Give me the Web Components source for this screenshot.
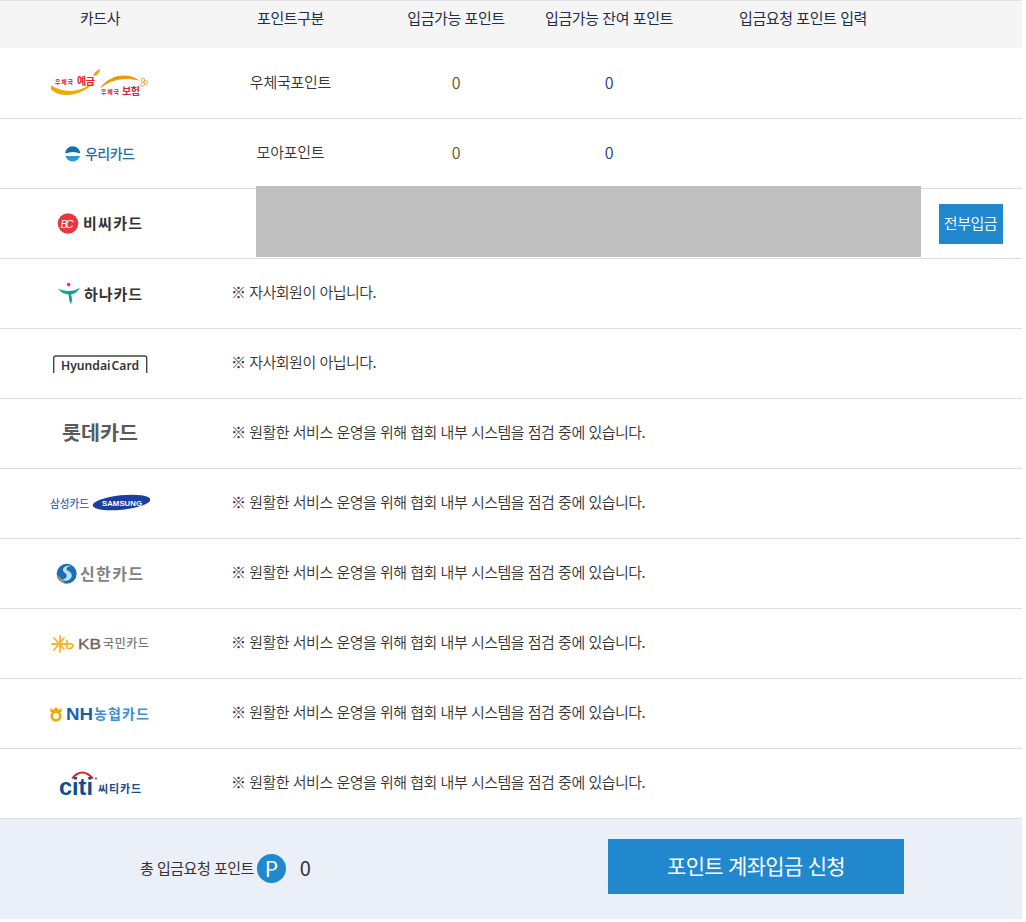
<!DOCTYPE html>
<html lang="ko">
<head>
<meta charset="utf-8">
<title>포인트 계좌입금</title>
<style>
    html, body {
        margin: 0;
        background: #fff;
        font-family: "Noto Sans CJK KR", "Noto Sans", sans-serif;
        color: #333;
    }
</style>
</head>
<body>
<points-table>
    <table-head>
        <span>카드사</span>
        <span>포인트구분</span>
        <span>입금가능 포인트</span>
        <span>입금가능 잔여 포인트</span>
        <span>입금요청 포인트 입력</span>
    </table-head>

    <card-row>
        <card-logo slot="logo" name="epost"></card-logo>
        <span slot="kind">우체국포인트</span>
        <span slot="avail">0</span>
        <span slot="rest">0</span>
    </card-row>
    <card-row>
        <card-logo slot="logo" name="woori"></card-logo>
        <span slot="kind">모아포인트</span>
        <span slot="avail">0</span>
        <span slot="rest">0</span>
    </card-row>
    <card-row>
        <card-logo slot="logo" name="bc"></card-logo>
        <redact-block slot="cover"></redact-block>
        <action-button slot="action">전부입금</action-button>
    </card-row>
    <card-row>
        <card-logo slot="logo" name="hana"></card-logo>
        <span slot="message">※ 자사회원이 아닙니다.</span>
    </card-row>
    <card-row>
        <card-logo slot="logo" name="hyundai"></card-logo>
        <span slot="message">※ 자사회원이 아닙니다.</span>
    </card-row>
    <card-row>
        <card-logo slot="logo" name="lotte"></card-logo>
        <span slot="message">※ 원활한 서비스 운영을 위해 협회 내부 시스템을 점검 중에 있습니다.</span>
    </card-row>
    <card-row>
        <card-logo slot="logo" name="samsung"></card-logo>
        <span slot="message">※ 원활한 서비스 운영을 위해 협회 내부 시스템을 점검 중에 있습니다.</span>
    </card-row>
    <card-row>
        <card-logo slot="logo" name="shinhan"></card-logo>
        <span slot="message">※ 원활한 서비스 운영을 위해 협회 내부 시스템을 점검 중에 있습니다.</span>
    </card-row>
    <card-row>
        <card-logo slot="logo" name="kb"></card-logo>
        <span slot="message">※ 원활한 서비스 운영을 위해 협회 내부 시스템을 점검 중에 있습니다.</span>
    </card-row>
    <card-row>
        <card-logo slot="logo" name="nh"></card-logo>
        <span slot="message">※ 원활한 서비스 운영을 위해 협회 내부 시스템을 점검 중에 있습니다.</span>
    </card-row>
    <card-row>
        <card-logo slot="logo" name="citi"></card-logo>
        <span slot="message">※ 원활한 서비스 운영을 위해 협회 내부 시스템을 점검 중에 있습니다.</span>
    </card-row>

    <total-bar total="0">
        <span slot="label">총 입금요청 포인트</span>
        <span slot="submit">포인트 계좌입금 신청</span>
    </total-bar>
</points-table>

<script>
// Shared column widths, passed to the rows as a custom property
const COLUMNS = '200px 181px 150px 156px 232px 103px';

// Outer wrapper of the whole table
class PointsTable extends HTMLElement {
    constructor() {
        super();
        const root = this.attachShadow({mode: 'open'});
        root.innerHTML = `
            <style>
                :host {
                    display: block;
                    width: 1022px;
                    --columns: ${COLUMNS};
                }
            </style>
            <slot></slot>
        `;
    }
}

// Grey header line of the table
class TableHead extends HTMLElement {
    constructor() {
        super();
        const root = this.attachShadow({mode: 'open'});
        root.innerHTML = `
            <style>
                :host {
                    display: grid;
                    grid-template-columns: var(--columns);
                    justify-items: center;
                    height: 47px;
                    border-top: 1px solid #e2e2e2;
                    background: #f5f5f5;
                    color: #1d2c4f;
                    font-size: 15px;
                    letter-spacing: -0.42px;
                    line-height: 33px;
                }
            </style>
            <slot></slot>
        `;
    }
}

// One card company. Either the point cells or a message are slotted in
class CardRow extends HTMLElement {
    constructor() {
        super();
        const root = this.attachShadow({mode: 'open'});
        root.innerHTML = `
            <style>
                :host {
                    display: grid;
                    grid-template-columns: var(--columns);
                    grid-template-rows: 69px;
                    align-items: center;
                    justify-items: center;
                    position: relative;
                    height: 69px;
                    border-top: 1px solid #ddd;
                    font-size: 15px;
                    font-weight: 350;
                    letter-spacing: -0.5px;
                    line-height: 22px;
                }
                :host(:first-of-type) { border-top-color: #fff; }
                div { grid-row: 1; }
                .logo { grid-column: 1; }
                .kind { grid-column: 2; padding-bottom: 4px; letter-spacing: -0.25px; }
                .avail { grid-column: 3; padding-bottom: 4px; font-size: 16px; color: #6a5228; }
                .rest { grid-column: 4; padding-bottom: 4px; font-size: 16px; color: #24407f; }
                .message { grid-column: 2 / 6; justify-self: start; padding: 0 0 4px 31px; }
                .action { grid-column: 6; }
            </style>
            <div class="logo"><slot name="logo"></slot></div>
            <div class="kind"><slot name="kind"></slot></div>
            <div class="avail"><slot name="avail"></slot></div>
            <div class="rest"><slot name="rest"></slot></div>
            <div class="message"><slot name="message"></slot></div>
            <div class="action"><slot name="action"></slot></div>
            <slot name="cover"></slot>
        `;
    }
}

// Grey block painted over the row's cells in the reference
class RedactBlock extends HTMLElement {
    constructor() {
        super();
        const root = this.attachShadow({mode: 'open'});
        root.innerHTML = `
            <style>
                :host {
                    display: block;
                    position: absolute;
                    left: 256px;
                    top: -3px;
                    width: 665px;
                    height: 71px;
                    background: #bfbfbf;
                }
            </style>
        `;
    }
}

// Small blue button
class ActionButton extends HTMLElement {
    constructor() {
        super();
        const root = this.attachShadow({mode: 'open'});
        root.innerHTML = `
            <style>
                :host {
                    display: flex;
                    align-items: center;
                    justify-content: center;
                    width: 64px;
                    height: 38px;
                    padding-bottom: 2px;
                    background: #2188cd;
                    color: #fff;
                    font-size: 15px;
                    letter-spacing: -0.45px;
                }
            </style>
            <slot></slot>
        `;
    }
}

// Footer with the total and the submit button
class TotalBar extends HTMLElement {
    constructor() {
        super();
        const root = this.attachShadow({mode: 'open'});
        root.innerHTML = `
            <style>
                :host {
                    display: flex;
                    align-items: center;
                    height: 100px;
                    padding-left: 140px;
                    border-top: 1px solid #ddd;
                    background: #eaeff8;
                }
                .label {
                    font-size: 15px;
                    letter-spacing: -0.5px;
                    color: #333;
                    line-height: 22px;
                    margin-top: -2px;
                }
                .badge {
                    display: flex;
                    align-items: center;
                    justify-content: center;
                    width: 29px;
                    height: 29px;
                    margin: -2px 0 0 3px;
                    border-radius: 50%;
                    background: #2188cd;
                    color: #fff;
                    font-size: 21px;
                    line-height: 29px;
                }
                .total {
                    margin: -3px 0 0 14px;
                    font-size: 20px;
                    line-height: 29px;
                    color: #333;
                }
                .submit {
                    display: flex;
                    align-items: center;
                    justify-content: center;
                    align-self: flex-start;
                    width: 296px;
                    height: 52px;
                    padding-bottom: 3px;
                    margin: 20px 118px 0 auto;
                    background: #2188cd;
                    color: #fff;
                    font-size: 21px;
                    letter-spacing: -0.7px;
                }
            </style>
            <span class="label"><slot name="label"></slot></span>
            <span class="badge">P</span>
            <span class="total"></span>
            <div class="submit"><slot name="submit"></slot></div>
        `;
        root.querySelector('.total').textContent = this.getAttribute('total');
    }
}

// Card company logos, all drawn on the same 100x30 canvas
const KR = 'font-family="Noto Sans CJK KR, sans-serif"';
const LATIN = 'font-family="Liberation Sans, sans-serif"';
const ROUND = 'font-family="Noto Sans, sans-serif"';
const LOGOS = {
    epost: `
        <path d="M1 16.5 C12 23 30 26 45 11 C36 26 12 31 1 20.5Z" fill="#f2a900"/>
        <path d="M50 19.5 C58 6 78 2 90 12 C76 8 62 10 50 19.5Z" fill="#ef9a00"/>
        <path d="M43 7 C44 3 47 1 50 0 C50 4 47 7 43 7Z" fill="#f0a030"/>
        <g fill="none" stroke="#f0a030" stroke-width="0.9"><circle cx="93" cy="11" r="1.8"/><circle cx="96" cy="13.5" r="1.8"/><circle cx="92.5" cy="15.5" r="1.8"/></g>
        <text x="5" y="14.5" ${KR} font-size="6" font-weight="700" fill="#d9232e" textLength="18">우체국</text>
        <text x="27" y="16" ${KR} font-size="10" font-weight="700" fill="#e0202c" textLength="18">예금</text>
        <text x="51" y="25" ${KR} font-size="6" font-weight="700" fill="#d9232e" textLength="18">우체국</text>
        <text x="72" y="25.5" ${KR} font-size="10" font-weight="700" fill="#e0202c" textLength="18">보험</text>`,
    woori: `
        <clipPath id="w"><circle cx="22.7" cy="14.8" r="7.6"/></clipPath>
        <g clip-path="url(#w)">
            <rect x="15" y="7" width="16" height="7" fill="#0f6fb0"/>
            <rect x="15" y="16.5" width="16" height="7" fill="#2a9ad8"/>
            <path d="M15 15 Q22.7 11 31 15 V17 H15Z" fill="#fff"/>
        </g>
        <text x="35" y="19.5" ${KR} font-size="14" font-weight="500" fill="#1b6ea8" textLength="50">우리카드</text>`,
    bc: `
        <circle cx="18" cy="14.5" r="10.3" fill="#e8383f"/>
        <text x="10.5" y="18.5" ${LATIN} font-size="11" font-style="italic" fill="#fff" textLength="13">BC</text>
        <text x="33" y="20" ${KR} font-size="15" font-weight="700" fill="#333" textLength="59">비씨카드</text>`,
    hana: `
        <path d="M8 9.5 C14 13 24 13 30 8.5 C26 15 23 15 21 15.5 C22 19 23 22 20.5 25 C19 22 19 18 18.5 15.5 C14 15 10 13 8 9.5Z" fill="#10a38e"/>
        <circle cx="18.6" cy="5.6" r="1.8" fill="#e8336d"/>
        <text x="34" y="20.5" ${KR} font-size="15" font-weight="700" fill="#333" textLength="58">하나카드</text>`,
    hyundai: `
        <path d="M3.7 24 V9 Q3.7 7 5.7 7 H94.7 Q96.7 7 96.7 9 V24" fill="none" stroke="#444" stroke-width="1.4"/>
        <text x="11" y="20.5" ${ROUND} font-size="12" font-weight="600" fill="#333" word-spacing="-2" textLength="78" lengthAdjust="spacingAndGlyphs">Hyundai Card</text>`,
    lotte: `
        <text x="12" y="21" ${KR} font-size="19" font-weight="700" fill="#5a5a5a" textLength="76" lengthAdjust="spacingAndGlyphs">롯데카드</text>`,
    samsung: `
        <text x="0" y="18.5" ${KR} font-size="11.5" font-weight="500" fill="#4767b2" textLength="39" lengthAdjust="spacingAndGlyphs">삼성카드</text>
        <ellipse cx="71.5" cy="13.5" rx="29" ry="7.3" transform="rotate(-6 71.5 13.5)" fill="#1c3f9f"/>
        <text x="52" y="16.5" ${LATIN} font-size="7.5" font-weight="700" fill="#fff" textLength="40" lengthAdjust="spacingAndGlyphs">SAMSUNG</text>`,
    shinhan: `
        <circle cx="16.7" cy="14.8" r="10" fill="#1d6fb4"/>
        <path d="M21 6.5 C13 6 11 11 15 14 C18 16 17.5 20 11 21 C17 23.5 23 20 21.5 15 C20.5 12 16 12 16.5 9.5 C17 8 19 7.5 21 6.5Z" fill="#bfe0f2"/>
        <path d="M7.5 16 C9 21 12 24 16 24.8 C12 22 11 19 7.5 16Z" fill="#c9a24a"/>
        <text x="30" y="20.5" ${KR} font-size="16" font-weight="700" fill="#828282" textLength="63">신한카드</text>`,
    kb: `
        <g stroke="#f7b52c" stroke-width="1.8" stroke-linecap="round">
            <path d="M2 15 H16"/><path d="M4 9 L14 20"/><path d="M14 9 L4 21"/><path d="M10 7 V23"/>
        </g>
        <path d="M17 11 V19 Q21 21 23 17 Q23 14 18 15" fill="none" stroke="#f7b52c" stroke-width="1.8"/>
        <text x="28" y="19.5" ${LATIN} font-size="15" fill="#6b625a" stroke="#6b625a" stroke-width="0.3" textLength="23" lengthAdjust="spacingAndGlyphs">KB</text>
        <text x="53" y="19" ${KR} font-size="12" font-weight="500" fill="#777" textLength="46">국민카드</text>`,
    nh: `
        <circle cx="6" cy="17" r="4.3" fill="none" stroke="#f5a800" stroke-width="2.6"/>
        <path d="M0.5 8.5 L3 11 L6 8 L9 11 L11.5 8.5 V13 H0.5Z" fill="#f5a800"/>
        <text x="16" y="20.5" ${LATIN} font-size="16" font-weight="700" fill="#1a5fa8" textLength="27" lengthAdjust="spacingAndGlyphs">NH</text>
        <text x="44" y="20" ${KR} font-size="14" font-weight="700" fill="#3d8fd6" textLength="55">농협카드</text>`,
    citi: `
        <path d="M22 9.5 Q32 -2.5 43 9.5" fill="none" stroke="#d8232a" stroke-width="1.8"/>
        <text x="9" y="25.5" ${LATIN} font-size="24" font-weight="700" fill="#0f4d8f" textLength="34" lengthAdjust="spacingAndGlyphs">citi</text>
        <circle cx="46" cy="9.5" r="0.9" fill="#0f4d8f"/>
        <text x="48" y="23.5" ${KR} font-size="11" font-weight="700" fill="#1c4a8a" textLength="43">씨티카드</text>`
};

class CardLogo extends HTMLElement {
    constructor() {
        super();
        const root = this.attachShadow({mode: 'open'});
        root.innerHTML = `
            <style>
                :host {
                    display: block;
                    width: 100px;
                    height: 30px;
                    letter-spacing: 0;
                }
                svg { display: block; }
            </style>
            <svg width="100" height="30" viewBox="0 0 100 30">${LOGOS[this.getAttribute('name')]}</svg>
        `;
    }
}

// Register the elements in the CustomElementRegistry
customElements.define('points-table', PointsTable);
customElements.define('table-head', TableHead);
customElements.define('card-row', CardRow);
customElements.define('redact-block', RedactBlock);
customElements.define('action-button', ActionButton);
customElements.define('total-bar', TotalBar);
customElements.define('card-logo', CardLogo);
</script>
</body>
</html>
